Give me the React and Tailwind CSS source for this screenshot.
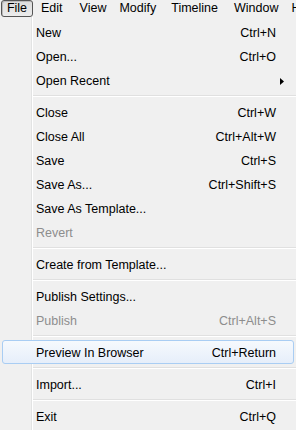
export default function App() {
  const font = { fontFamily: '"Liberation Sans", Arial, sans-serif' };
  const Item = ({ label, shortcut, disabled, arrow }) => (
    <div className={`h-[24px] flex items-center pt-[3px] pl-[36px] pr-[20px] ${disabled ? 'text-[#8d8d8d]' : 'text-black'}`}>
      <span className="flex-1 whitespace-nowrap">{label}</span>
      {shortcut && <span className="whitespace-nowrap">{shortcut}</span>}
      {arrow && (
        <svg width="4" height="7" viewBox="0 0 4 7" className="mr-[-8px]">
          <path d="M0 0 L4 3.5 L0 7 Z" fill="#000" />
        </svg>
      )}
    </div>
  );
  const Sep = () => (
    <div className="h-[8px] flex flex-col justify-center pl-[33px]">
      <div className="h-[1px] bg-[#e0e0e0]" />
      <div className="h-[1px] bg-white" />
    </div>
  );
  return (
    <div className="w-[296px] h-[430px] bg-[#f0f0f0] overflow-hidden text-[12.5px] leading-none" style={font}>
      <div className="h-[17px] flex items-center whitespace-nowrap overflow-hidden">
        <div className="shrink-0 ml-[1px] h-[17px] w-[32px] flex items-center justify-center rounded-[3px] border border-[#555] bg-[linear-gradient(to_bottom,#dcdcdc,#ececec)] shadow-[inset_1px_1px_0_#bbb]">
          File
        </div>
        <span className="shrink-0 ml-[8px]">Edit</span>
        <span className="shrink-0 ml-[17px]">View</span>
        <span className="shrink-0 ml-[13px]">Modify</span>
        <span className="shrink-0 ml-[15px]">Timeline</span>
        <span className="shrink-0 ml-[16px]">Window</span>
        <span className="shrink-0 ml-[13px]">Help</span>
      </div>
      <div className="pt-[3px] h-full bg-[linear-gradient(to_right,transparent_31px,#e2e3e3_31px,#e2e3e3_32px,#ffffff_32px,#ffffff_33px,transparent_33px)]">
        <Item label="New" shortcut="Ctrl+N" />
        <Item label="Open..." shortcut="Ctrl+O" />
        <Item label="Open Recent" arrow />
        <Sep />
        <Item label="Close" shortcut="Ctrl+W" />
        <Item label="Close All" shortcut="Ctrl+Alt+W" />
        <Item label="Save" shortcut="Ctrl+S" />
        <Item label="Save As..." shortcut="Ctrl+Shift+S" />
        <Item label="Save As Template..." />
        <Item label="Revert" disabled />
        <Sep />
        <Item label="Create from Template..." />
        <Sep />
        <Item label="Publish Settings..." />
        <Item label="Publish" shortcut="Ctrl+Alt+S" disabled />
        <Sep />
        <div className="mx-[2px] h-[24px] flex items-center pt-[2px] pl-[33px] pr-[17px] rounded-[3px] border border-[#a9cdf3] bg-[linear-gradient(to_bottom,#f6f9fd,#e6eefa)]">
          <span className="flex-1 whitespace-nowrap">Preview In Browser</span>
          <span className="whitespace-nowrap">Ctrl+Return</span>
        </div>
        <Sep />
        <Item label="Import..." shortcut="Ctrl+I" />
        <Sep />
        <Item label="Exit" shortcut="Ctrl+Q" />
      </div>
    </div>
  );
}
